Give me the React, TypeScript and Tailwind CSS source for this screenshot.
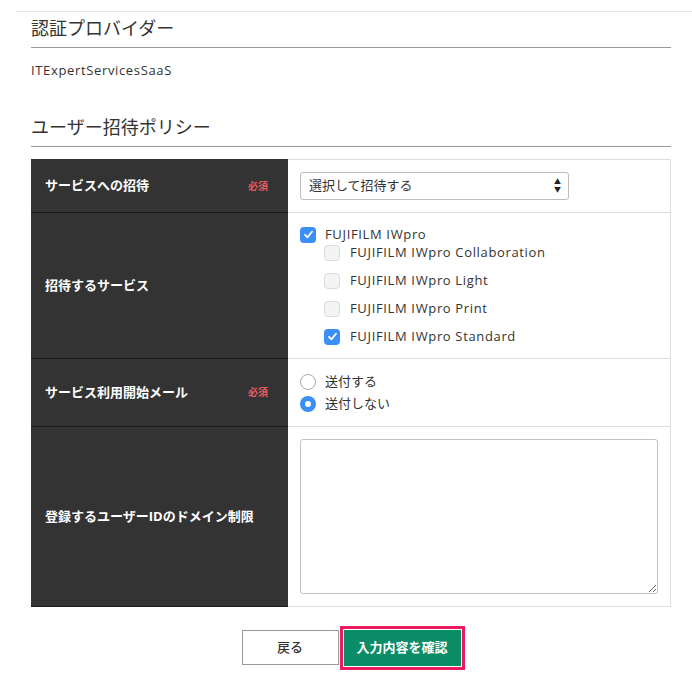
const font = { fontFamily: '"Open Sans", "Noto Sans CJK JP", sans-serif' };

function CheckBox({ checked }: { checked: boolean }) {
  if (checked) {
    return (
      <span className="flex h-4 w-4 shrink-0 items-center justify-center rounded-[4px] bg-[#3a8ef6]">
        <svg width="11" height="11" viewBox="0 0 12 12" fill="none">
          <path d="M2.2 6.3 L4.9 9 L9.8 3" stroke="white" strokeWidth="2" strokeLinecap="round" strokeLinejoin="round" />
        </svg>
      </span>
    );
  }
  return <span className="h-4 w-4 shrink-0 rounded-[4px] border border-[#dcdcdc] bg-[#f4f4f4]" />;
}

function Radio({ checked }: { checked: boolean }) {
  if (checked) {
    return (
      <span className="flex h-4 w-4 shrink-0 items-center justify-center rounded-full bg-[#3a8ef6]">
        <span className="h-[6px] w-[6px] rounded-full bg-white" />
      </span>
    );
  }
  return <span className="h-4 w-4 shrink-0 rounded-full border border-[#a9a9a9] bg-white" />;
}

function Row({
  label,
  required = false,
  height,
  first = false,
  children,
}: {
  label: string;
  required?: boolean;
  height: string;
  first?: boolean;
  children: React.ReactNode;
}) {
  return (
    <div className={`grid grid-cols-[257px_383px] ${height}`}>
      <div className={`flex items-center justify-between border-b border-[#1c1c1c] bg-[#333333] pl-[14px] pr-[20px] ${first ? 'border-t border-t-[#333333]' : ''}`}>
        <span className="text-[13px] font-bold text-white">{label}</span>
        {required && <span className="text-[10px] font-bold text-[#e85a5f]">必須</span>}
      </div>
      <div className={`flex items-center border-b border-r border-[#dddddd] pl-3 pr-3 ${first ? 'border-t' : ''}`}>
        {children}
      </div>
    </div>
  );
}

const services = [
  { name: 'FUJIFILM IWpro Collaboration', checked: false },
  { name: 'FUJIFILM IWpro Light', checked: false },
  { name: 'FUJIFILM IWpro Print', checked: false },
  { name: 'FUJIFILM IWpro Standard', checked: true },
];

export default function App() {
  return (
    <div className="min-h-[693px] bg-white pl-4 pt-[11px] text-[#333333]" style={font}>
      <div className="border-t border-[#e6e6e6] pl-[15px]">
        <div className="w-[640px]">
          <h2 className="border-b border-[#999999] pb-[5px] pt-[3px] text-[18px] font-normal leading-[27px] text-[#333333]">
            認証プロバイダー
          </h2>
          <p className="mt-[13px] text-[13px] leading-[18px] tracking-[0.05em]">ITExpertServicesSaaS</p>

          <h2 className="mt-[35px] border-b border-[#999999] pb-[5px] text-[18px] font-normal leading-[27px] text-[#333333]">
            ユーザー招待ポリシー
          </h2>

          <div className="mt-3">
            <Row label="サービスへの招待" required height="h-[54px]" first>
              <div className="flex h-[28px] w-[269px] items-center justify-between rounded-[3px] border border-[#bdbdbd] bg-white pl-2 pr-[7px] text-[13px]">
                <span>選択して招待する</span>
                <span className="flex flex-col items-center text-[7px] leading-[8px] text-[#222]">
                  <span>▲</span>
                  <span>▼</span>
                </span>
              </div>
            </Row>

            <Row label="招待するサービス" height="h-[146px]">
              <div className="flex flex-col text-[13px] tracking-[0.05em]">
                <label className="flex h-4 items-center gap-[9px]">
                  <CheckBox checked />
                  <span>FUJIFILM IWpro</span>
                </label>
                <div className="mt-[2px] flex flex-col gap-3 pl-6">
                  {services.map((s) => (
                    <label key={s.name} className="flex h-4 items-center gap-[10px]">
                      <CheckBox checked={s.checked} />
                      <span>{s.name}</span>
                    </label>
                  ))}
                </div>
              </div>
            </Row>

            <Row label="サービス利用開始メール" required height="h-[68px]">
              <div className="flex flex-col gap-[6px] text-[13px]">
                <label className="flex h-4 items-center gap-[9px]">
                  <Radio checked={false} />
                  <span>送付する</span>
                </label>
                <label className="flex h-4 items-center gap-[9px]">
                  <Radio checked />
                  <span>送付しない</span>
                </label>
              </div>
            </Row>

            <Row label="登録するユーザーIDのドメイン制限" height="h-[180px]">
              <textarea className="block h-[155px] w-full rounded-[3px] border border-[#c2c2c2] bg-white p-2 text-[13px] outline-none" />
            </Row>
          </div>

          <div className="mt-[23px] flex justify-center gap-[5px]">
            <button
              type="button"
              className="h-[35px] w-[97px] border border-[#9a9a9a] bg-white text-[13px] font-medium text-[#333]"
            >
              戻る
            </button>
            <button
              type="button"
              className="h-[36px] w-[117px] rounded-none bg-[#0a8c66] text-[13px] font-bold text-white outline-[3px] outline-offset-1 outline-[#ea1b5f] outline-solid"
            >
              入力内容を確認
            </button>
          </div>
        </div>
      </div>
    </div>
  );
}
